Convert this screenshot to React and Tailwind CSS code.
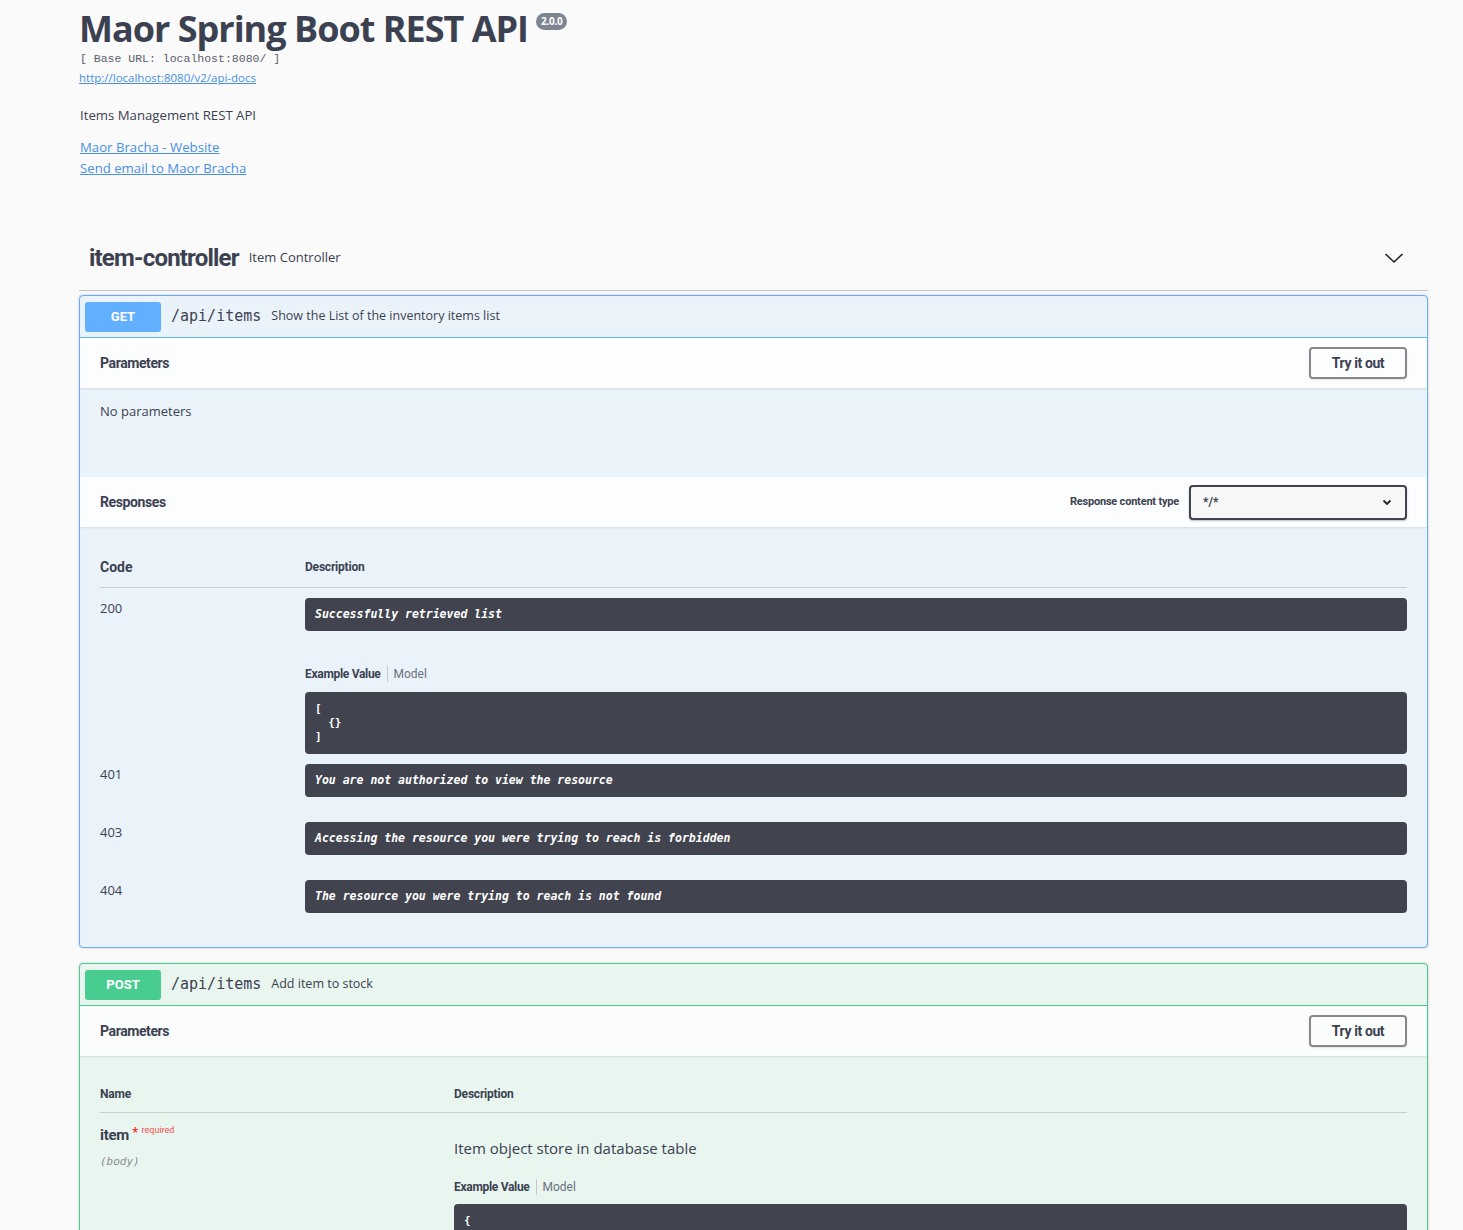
import React from "react";

const T = "font-['Roboto',sans-serif]";
const O = "font-['Open_Sans',sans-serif]";
const M = "font-['DejaVu_Sans_Mono',monospace]";

function DescBlock({ children }) {
  return (
    <div className="h-[33px] flex items-center px-[10px] rounded-[4px] bg-[#41444e] text-white text-[11.5px] font-bold italic font-['DejaVu_Sans_Mono',monospace] whitespace-pre">
      {children}
    </div>
  );
}

function TryButton() {
  return (
    <div className="h-[32px] w-[98px] border-2 border-[#888888] rounded-[4px] flex items-center justify-center text-[14px] font-bold tracking-[-0.4px] text-[#3b4151] font-['Roboto',sans-serif] shadow-[0_1px_2px_rgba(0,0,0,0.1)]">
      Try it out
    </div>
  );
}

function SectionHeader({ title, right }) {
  return (
    <div className="relative z-10 flex items-center justify-between h-[50px] px-[20px] bg-white/80 shadow-[0_1px_2px_rgba(0,0,0,0.1)]">
      <div className={`${T} text-[14px] font-bold tracking-[-0.4px] text-[#3b4151]`}>{title}</div>
      {right}
    </div>
  );
}

function Tabs() {
  return (
    <div className={`flex items-center h-[16px] text-[12px] ${T}`}>
      <span className="font-bold text-[#3b4151] tracking-[-0.3px]">Example Value</span>
      <span className="mx-[6px] w-px h-[16px] bg-[#c5c8cd]"></span>
      <span className="text-[#6b7280]">Model</span>
    </div>
  );
}

function Summary({ method, color, path, desc, border }) {
  return (
    <div className={`flex items-center h-[42px] px-[5px] border-b ${border}`}>
      <div
        className={`h-[30px] w-[76px] rounded-[3px] flex items-center justify-center text-white text-[13px] font-bold ${T} ${color}`}
      >
        {method}
      </div>
      <div className={`ml-[10px] text-[15px] font-normal text-[#3b4151] ${M}`}>{path}</div>
      <div className={`ml-[10px] text-[12.5px] text-[#3b4151] ${O}`}>{desc}</div>
    </div>
  );
}

export default function App() {
  return (
    <div className={`h-[1230px] overflow-hidden bg-[#fafafa] text-[#3b4151] ${O}`}>
      <div className="ml-[79px] w-[1349px] pt-[7px]">
        {/* Info */}
        <div className="flex items-start">
          <h2 className="text-[36px] leading-[44px] font-bold text-[#3b4151] tracking-[-1px]">
            Maor Spring Boot REST API
          </h2>
          <span className="ml-[8px] mt-[6px] px-[5px] h-[17px] rounded-full bg-[#7d8492] text-white text-[10px] font-bold flex items-center tracking-[-0.3px]">
            2.0.0
          </span>
        </div>
        <div className="text-[11.5px] leading-[16px] text-[#5a5f6b] font-['Liberation_Mono',monospace] ml-[1px]">
          [ Base URL: localhost:8080/ ]
        </div>
        <div className="mt-[1px] text-[11.5px] leading-[20px]">
          <a className="text-[#4990e2] underline" href="#">http://localhost:8080/v2/api-docs</a>
        </div>
        <div className="mt-[17px] text-[13.2px] leading-[20px] ml-[1px]">Items Management REST API</div>
        <div className="mt-[12px] text-[13.2px] leading-[21px] ml-[1px]">
          <div>
            <a className="text-[#4990e2] underline" href="#">Maor Bracha - Website</a>
          </div>
          <div>
            <a className="text-[#4990e2] underline" href="#">Send email to Maor Bracha</a>
          </div>
        </div>

        {/* Tag header */}
        <div className="mt-[47px] h-[65px] flex items-center border-b border-[#3b4151]/30 pl-[10px] pr-[24px]">
          <span className={`${T} text-[24px] font-bold tracking-[-0.8px] text-[#3b4151]`}>item-controller</span>
          <span className="ml-[10px] text-[13px] text-[#3b4151]">Item Controller</span>
          <svg className="ml-auto" width="20" height="20" viewBox="0 0 20 20" fill="none">
            <polyline points="1.5,6 10,14 18.5,6" stroke="#222" strokeWidth="1.6" fill="none" />
          </svg>
        </div>

        {/* GET block */}
        <div className="mt-[4px] border border-[#61affe] rounded-[4px] bg-[#ebf3fa] shadow-[0_0_3px_rgba(0,0,0,0.19)] overflow-hidden">
          <Summary
            method="GET"
            color="bg-[#61affe]"
            path="/api/items"
            desc="Show the List of the inventory items list"
            border="border-[#61affe]"
          />
          <SectionHeader title="Parameters" right={<TryButton />} />
          <div className="h-[89px] px-[20px] pt-[13px] text-[13px] leading-[20px]">No parameters</div>
          <SectionHeader
            title="Responses"
            right={
              <div className="flex items-center">
                <span className={`${T} text-[11px] font-bold tracking-[-0.2px] mr-[10px]`}>Response content type</span>
                <div className="h-[35px] w-[218px] border-2 border-[#41444e] rounded-[4px] bg-[#f7f7f7] flex items-center justify-between pl-[12px] pr-[12px] shadow-[0_1px_2px_rgba(0,0,0,0.25)]">
                  <span className={`${T} text-[12px] font-bold`}>*/*</span>
                  <svg width="12" height="12" viewBox="0 0 12 12">
                    <polyline points="2.5,4.5 6,8 9.5,4.5" stroke="#222" strokeWidth="1.8" fill="none" />
                  </svg>
                </div>
              </div>
            }
          />
          <div className="px-[20px] pt-[20px] pb-[19px]">
            <div className="h-[41px] flex items-center border-b border-[#3b4151]/20">
              <div className={`w-[205px] ${T} text-[14px] font-bold`}>Code</div>
              <div className={`${T} text-[12px] font-bold tracking-[-0.2px]`}>Description</div>
            </div>
            {/* 200 */}
            <div className="flex pt-[10px]">
              <div className="w-[205px] text-[13px] leading-[20px]">200</div>
              <div className="flex-1">
                <DescBlock>Successfully retrieved list</DescBlock>
                <div className="mt-[35px]">
                  <Tabs />
                </div>
                <div className={`mt-[10px] h-[62px] rounded-[4px] bg-[#41444e] text-white text-[11px] font-bold leading-[14px] p-[10px] whitespace-pre ${M}`}>
                  {"[\n  {}\n]"}
                </div>
              </div>
            </div>
            {[
              ["401", "You are not authorized to view the resource"],
              ["403", "Accessing the resource you were trying to reach is forbidden"],
              ["404", "The resource you were trying to reach is not found"],
            ].map(([c, d]) => (
              <div key={c} className="flex pt-[10px]">
                <div className="w-[205px] text-[13px] leading-[20px]">{c}</div>
                <div className="flex-1 mb-[15px]">
                  <DescBlock>{d}</DescBlock>
                </div>
              </div>
            ))}
          </div>
        </div>

        {/* POST block */}
        <div className="mt-[15px] border border-[#49cc90] rounded-[4px] bg-[#e9f5ef] shadow-[0_0_3px_rgba(0,0,0,0.19)] overflow-hidden">
          <Summary
            method="POST"
            color="bg-[#49cc90]"
            path="/api/items"
            desc="Add item to stock"
            border="border-[#49cc90]"
          />
          <SectionHeader title="Parameters" right={<TryButton />} />
          <div className="px-[20px] pt-[20px] pb-[20px]">
            <div className="h-[37px] flex items-center border-b border-[#3b4151]/20">
              <div className={`w-[354px] ${T} text-[12px] font-bold tracking-[-0.2px]`}>Name</div>
              <div className={`${T} text-[12px] font-bold tracking-[-0.2px]`}>Description</div>
            </div>
            <div className="flex pt-[12px]">
              <div className="w-[354px]">
                <div className="flex items-start leading-[20px]">
                  <span className={`${T} text-[15px] font-bold tracking-[-0.3px]`}>item</span>
                  <span className="ml-[3px] text-[#ff0000] text-[12px] leading-[16px]">*</span>
                  <span className={`ml-[3px] -mt-[3px] text-[#ff0000]/70 text-[9px] leading-[16px] ${T}`}>required</span>
                </div>
                <div className={`mt-[9px] text-[11px] italic text-[#3b4151]/60 ${M}`}>(body)</div>
              </div>
              <div className="flex-1">
                <div className="mt-[12px] text-[15px] leading-[22px] text-[#3b4151]">Item object store in database table</div>
                <div className="mt-[20px]">
                  <Tabs />
                </div>
                <div className={`mt-[9px] h-[120px] rounded-[4px] bg-[#41444e] text-white text-[11px] font-bold leading-[16px] px-[10px] pt-[9px] whitespace-pre ${M}`}>
                  {"{"}
                </div>
              </div>
            </div>
          </div>
        </div>
      </div>
    </div>
  );
}
